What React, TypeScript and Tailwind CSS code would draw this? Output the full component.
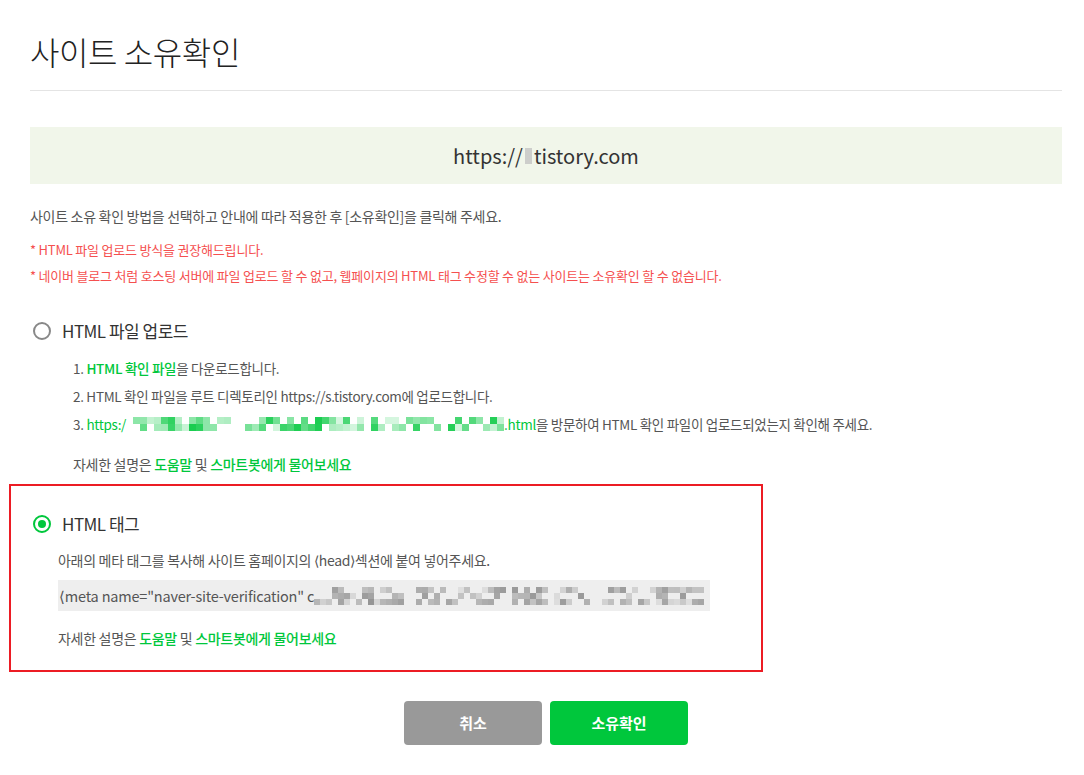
import { useMemo } from "react";

const FONT = { fontFamily: '"Noto Sans CJK KR", "Noto Sans", sans-serif' };

// seeded noise so the blurred (mosaic) parts look the same every render
function makeCells(seed: number, cols: number, rows: number, density: number) {
    let s = seed;
    const rand = () => {
        s = (s * 9301 + 49297) % 233280;
        return s / 233280;
    };
    const cells: { x: number; y: number; o: number }[] = [];
    for (let c = 0; c < cols; c++) {
        for (let r = 0; r < rows; r++) {
            const v = rand();
            if (v < density) cells.push({ x: c, y: r, o: 0.15 + rand() * 0.75 });
        }
    }
    return cells;
}

function Mosaic({ width, height, cell, color, seed, density = 0.6 }: { width: number; height: number; cell: number; color: string; seed: number; density?: number }) {
    const cols = Math.floor(width / cell);
    const rows = Math.floor(height / cell);
    const cells = useMemo(() => makeCells(seed, cols, rows, density), [seed, cols, rows, density]);
    return (
        <svg width={width} height={height} className="inline-block align-middle shrink-0">
            {cells.map((c, i) => (
                <rect key={i} x={c.x * cell} y={c.y * cell} width={cell} height={cell} fill={color} opacity={c.o} />
            ))}
        </svg>
    );
}

function Radio({ checked }: { checked?: boolean }) {
    if (checked) {
        return (
            <span className="w-[18px] h-[18px] rounded-full border-[2.5px] border-[#00c73c] flex items-center justify-center shrink-0">
                <span className="w-[8px] h-[8px] rounded-full bg-[#00c73c]"></span>
            </span>
        );
    }
    return <span className="w-[18px] h-[18px] rounded-full border-2 border-[#888] shrink-0"></span>;
}

function HelpLine() {
    return (
        <p className="text-[14px] leading-[20px] text-[#555] tracking-[-0.3px]">
            자세한 설명은 <span className="text-[#00c73c] font-medium">도움말</span> 및{" "}
            <span className="text-[#00c73c] font-medium">스마트봇에게 물어보세요</span>
        </p>
    );
}

export default function App() {
    return (
        <div className="bg-white min-h-[775px] px-[30px] text-[#333]" style={FONT}>
            <h1 className="pt-[30px] pb-[18px] text-[32px] leading-[42px] font-light tracking-[-0.4px] text-[#222]">
                사이트 소유확인
            </h1>
            <div className="w-[1032px] border-t border-[#e4e4e4]"></div>

            <div className="mt-[36px] w-[1032px] h-[57px] bg-[#f1f6ea] flex items-center justify-center text-[20px] text-[#333]">
                <span>https://</span>
                <span className="inline-block w-[7px] h-[16px] bg-[#bdbdbd] mx-[2px] opacity-70"></span>
                <span>tistory.com</span>
            </div>

            <p className="mt-[22px] text-[14px] leading-[20px] text-[#555] tracking-[-0.3px]">
                사이트 소유 확인 방법을 선택하고 안내에 따라 적용한 후 [소유확인]을 클릭해 주세요.
            </p>
            <div className="mt-[11px] text-[13px] leading-[26px] text-[#f5504f] tracking-[-0.2px]">
                <p>* HTML 파일 업로드 방식을 권장해드립니다.</p>
                <p>* 네이버 블로그 처럼 호스팅 서버에 파일 업로드 할 수 없고, 웹페이지의 HTML 태그 수정할 수 없는 사이트는 소유확인 할 수 없습니다.</p>
            </div>

            <div className="mt-[30px] pl-[3px] flex items-center gap-[11px] h-[24px]">
                <Radio />
                <span className="text-[17px] text-[#333] tracking-[-0.5px]">HTML 파일 업로드</span>
            </div>
            <ol className="mt-[11px] pl-[43px] text-[13.5px] leading-[28px] text-[#555] tracking-[-0.3px]">
                <li>
                    1. <span className="text-[#00c73c] font-medium">HTML 확인 파일</span>을 다운로드합니다.
                </li>
                <li>2. HTML 확인 파일을 루트 디렉토리인 https://s.tistory.com에 업로드합니다.</li>
                <li className="flex items-center whitespace-nowrap">
                    <span>3.&nbsp;</span>
                    <span className="text-[#00c73c]">https:/</span>
                    <Mosaic width={378} height={14} cell={7} color="#00c73c" seed={17} density={0.65} />
                    <span className="text-[#00c73c]">.html</span>
                    <span>을 방문하여 HTML 확인 파일이 업로드되었는지 확인해 주세요.</span>
                </li>
            </ol>
            <div className="mt-[16px] pl-[43px]">
                <HelpLine />
            </div>

            <section className="mt-[10px] -ml-[21px] w-[754px] border-2 border-[#ec1c24] pl-[22px] pt-[26px] pb-[22px]">
                <div className="flex items-center gap-[11px] h-[24px]">
                    <Radio checked />
                    <span className="text-[17px] text-[#333] tracking-[-0.5px]">HTML 태그</span>
                </div>
                <div className="pl-[25px]">
                    <p className="mt-[14px] text-[14px] leading-[20px] text-[#555] tracking-[-0.3px]">
                        아래의 메타 태그를 복사해 사이트 홈페이지의 ⟨head⟩섹션에 붙여 넣어주세요.
                    </p>
                    <div className="mt-[10px] w-[652px] h-[31px] bg-[#eeeeee] flex items-center text-[14.5px] text-[#555] tracking-[-0.2px] overflow-hidden whitespace-nowrap">
                        <span className="pl-[1px]">⟨meta name="naver-site-verification" c</span>
                        <Mosaic width={396} height={18} cell={6} color="#8a8a8a" seed={41} density={0.55} />
                    </div>
                    <div className="mt-[17px]">
                        <HelpLine />
                    </div>
                </div>
            </section>

            <div className="mt-[29px] flex justify-center gap-[8px] pl-[8px]">
                <button className="w-[138px] h-[44px] rounded-[4px] bg-[#999] text-white text-[15px] font-bold">취소</button>
                <button className="w-[138px] h-[44px] rounded-[4px] bg-[#00c73c] text-white text-[15px] font-bold">소유확인</button>
            </div>
        </div>
    );
}
